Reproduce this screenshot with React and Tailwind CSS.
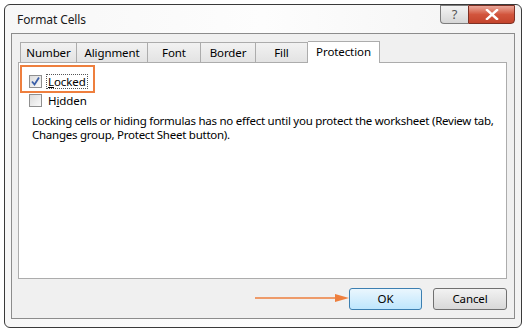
import React from 'react';

const FONT = { fontFamily: '"Noto Sans", "Open Sans", Arial, sans-serif' };

const TABS = ['Number', 'Alignment', 'Font', 'Border', 'Fill'];
const TAB_W = ['w-[57px]', 'w-[71px]', 'w-[53px]', 'w-[55px]', 'w-[52px]'];

function Checkbox({ checked }) {
  return (
    <span className="w-[13px] h-[13px] border border-[#8f8f8f] bg-gradient-to-br from-[#dcdcdc] to-[#fafafa] flex items-center justify-center shrink-0">
      {checked && (
        <svg width="11" height="11" viewBox="0 0 11 11">
          <path d="M2 5.5 L4.5 8.5 L9 1.5" fill="none" stroke="#3b5fa8" strokeWidth="1.8" />
        </svg>
      )}
    </span>
  );
}

function TitleButtons() {
  return (
    <div className="flex self-start">
      <div className="w-[28px] h-[19px] border border-[#7d7d7d] border-r-0 rounded-bl-[4px] bg-gradient-to-b from-[#f4f4f4] to-[#d6d6d6] flex items-center justify-center text-[13px] text-[#555]">
        ?
      </div>
      <div className="w-[47px] h-[19px] border border-[#7d3024] rounded-br-[4px] bg-gradient-to-b from-[#e9a79a] via-[#d2553d] to-[#c4442c] flex items-center justify-center">
        <svg width="14" height="11" viewBox="0 0 14 11">
          <path d="M2 1 L12 10 M12 1 L2 10" stroke="#ffffff" strokeWidth="2.4" strokeLinecap="square" />
        </svg>
      </div>
    </div>
  );
}

export default function App() {
  return (
    <div className="w-[525px] h-[331px] bg-white pt-[4px] pl-[4px] pr-[3px] pb-[3px] text-[11.5px] tracking-[-0.1px] text-black" style={FONT}>
      <div className="w-full h-full border border-[#3a3a3a] rounded-[6px] bg-gradient-to-r from-[#f7f7f7] via-[#fdfdfd] to-[#f3f3f3] flex flex-col px-[6px] pb-[8px]">
        {/* title bar */}
        <div className="h-[28px] flex items-center justify-between pl-[6px]">
          <span className="text-[12px] text-[#1a1a1a] mt-[2px]">Format Cells</span>
          <TitleButtons />
        </div>

        {/* client area */}
        <div className="flex-1 border border-[#8c8c8c] bg-[#f0f0f0] flex flex-col pt-[7px] pl-[6px] pr-[7px]">
          {/* tab strip */}
          <div className="flex items-end h-[21px] pl-[2px]">
            {TABS.map((t, i) => (
              <div
                key={t}
                className={`${TAB_W[i]} h-[20px] border border-[#acacac] border-b-0 ${i > 0 ? 'border-l-0' : ''} bg-gradient-to-b from-[#f2f2f2] to-[#e3e3e3] flex items-center justify-center`}
              >
                {t}
              </div>
            ))}
            <div className="w-[72px] h-[22px] border border-[#acacac] border-b-0 border-l-0 bg-white flex items-center justify-center -mb-px relative z-10 pb-[2px]">
              Protection
            </div>
          </div>

          {/* tab page */}
          <div className="h-[217px] border border-[#acacac] bg-white flex flex-col relative">
            <div className="absolute left-px top-[2px] w-[75px] h-[28px] border-2 border-[#ee7f3e]" />
            <div className="flex items-center gap-[4px] pl-[10px] mt-[11px] h-[15px]">
              <Checkbox checked />
              <span className="border border-dotted border-[#555] leading-[13px] px-[1px]">
                <span className="underline">L</span>ocked
              </span>
            </div>
            <div className="flex items-center gap-[5px] pl-[10px] mt-[4px] h-[15px]">
              <Checkbox />
              <span className="leading-[13px] pl-[1px]">
                H<span className="underline">i</span>dden
              </span>
            </div>
            <p className="pl-[13px] mt-[6px] leading-[14px] whitespace-nowrap tracking-[-0.25px]">
              Locking cells or hiding formulas has no effect until you protect the worksheet (Review tab,
              <br />
              Changes group, Protect Sheet button).
            </p>
          </div>

          {/* buttons */}
          <div className="flex-1 flex items-center justify-end gap-[11px] relative">
            <svg className="absolute left-[237px] top-[14px]" width="95" height="10" viewBox="0 0 95 10">
              <path d="M0 5 L82 5" stroke="#ee7f3e" strokeWidth="1.5" />
              <path d="M80 1 L94 5 L80 9 Z" fill="#ee7f3e" />
            </svg>
            <div className="w-[73px] h-[22px] border border-[#3c7fb1] rounded-[3px] bg-gradient-to-b from-[#eaf6fd] to-[#bee6fd] flex items-center justify-center">
              OK
            </div>
            <div className="w-[74px] h-[22px] border border-[#707070] rounded-[3px] bg-gradient-to-b from-[#f2f2f2] to-[#d8d8d8] flex items-center justify-center">
              Cancel
            </div>
          </div>
        </div>
      </div>
    </div>
  );
}
